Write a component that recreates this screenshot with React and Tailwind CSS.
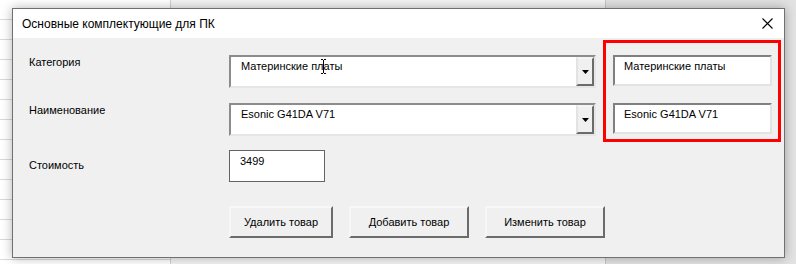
import React from 'react'

const font = "font-['Liberation_Sans','Noto_Sans',Arial,sans-serif]"

function ComboBox({ value, cursor }) {
  return (
    <div className="relative flex h-[33px] w-[367px] border-2 border-t-[#8c8c8c] border-l-[#8c8c8c] border-r-[#e6e6e6] border-b-[#e6e6e6] bg-white">
      <div className="flex-1 pl-[10px] pt-[3px] text-[11px] leading-[13px] text-black">{value}</div>
      <div className="flex w-[18px] items-center justify-center border-2 border-t-[#f4f4f4] border-l-[#e3e3e3] border-r-[#6b6b6b] border-b-[#6b6b6b] bg-[#f0f0f0]">
        <svg width="7" height="4" viewBox="0 0 7 4">
          <path d="M0 0h7L3.5 4z" fill="#000" />
        </svg>
      </div>
      {cursor && (
        <svg className="absolute left-[90px] top-[2px]" width="5" height="15" viewBox="0 0 5 15">
          <path d="M0 0.5h2M3 0.5h2M2.5 1v13M0 14.5h2M3 14.5h2" stroke="#000" strokeWidth="1" />
        </svg>
      )}
    </div>
  )
}

function TextBox({ value }) {
  return (
    <div className="h-[31px] w-[159px] border-2 border-t-[#808080] border-l-[#808080] border-r-[#e3e3e3] border-b-[#e3e3e3] bg-white pl-[9px] pt-[3px] text-[11px] leading-[13px] text-black">
      {value}
    </div>
  )
}

function Button({ children, w }) {
  return (
    <button className={`flex h-[32px] shrink-0 items-center justify-center border-2 border-t-[#f7f7f7] border-l-[#f7f7f7] border-r-[#6b6b6b] border-b-[#6b6b6b] bg-[#f0f0f0] text-[11px] text-black ${w}`}>
      {children}
    </button>
  )
}

export default function App() {
  return (
    <div className={`relative h-[264px] w-[796px] overflow-hidden ${font}`}>
      {/* лист Excel на фоне */}
      <div className="flex h-full w-full">
        <div className="w-[170px] bg-white bg-[repeating-linear-gradient(to_bottom,transparent_0px,transparent_19px,#dadada_19px,#dadada_20px)]" />
        <div className="w-[435px] border-l border-[#d0d0d0] bg-[#f4f4f4]" />
        <div className="flex-1 border-l border-[#c6c6c6] bg-[#e2e2e2]" />
      </div>

      {/* окно формы */}
      <div className="absolute left-[12px] top-[8px] flex h-[250px] w-[773px] flex-col border border-[#707070] bg-[#f0f0f0] shadow-[0_0_10px_rgba(0,0,0,0.3)]">
        <div className="flex h-[29px] items-center justify-between bg-white pl-[9px] pr-[11px]">
          <span className="text-[12px] text-black">Основные комплектующие для ПК</span>
          <svg width="11" height="11" viewBox="0 0 11 11">
            <path d="M0.5 0.5l10 10M10.5 0.5l-10 10" stroke="#000" strokeWidth="1.1" />
          </svg>
        </div>

        <div className="flex flex-1 pl-[16px] pt-[2px]">
          <div className="mt-[15px] flex w-[567px] shrink-0 flex-col">
            <div className="flex">
              <div className="w-[200px] pt-[1px] text-[11px] leading-[13px] text-black">Категория</div>
              <ComboBox value="Материнские платы" cursor />
            </div>
            <div className="mt-[15px] flex">
              <div className="w-[200px] pt-[1px] text-[11px] leading-[13px] text-black">Наименование</div>
              <ComboBox value="Esonic G41DA V71" />
            </div>
            <div className="mt-[14px] flex">
              <div className="w-[200px] pt-[9px] text-[11px] leading-[13px] text-black">Стоимость</div>
              <div className="h-[32px] w-[96px] border border-[#646464] bg-white pl-[10px] pt-[4px] text-[11px] leading-[13px] text-black">
                3499
              </div>
            </div>
            <div className="mt-[24px] flex gap-[16px] pl-[200px]">
              <Button w="w-[104px]">Удалить товар</Button>
              <Button w="w-[120px]">Добавить товар</Button>
              <Button w="w-[120px]">Изменить товар</Button>
            </div>
          </div>

          <div className="ml-[7px] flex h-[102px] w-[178px] shrink-0 flex-col gap-[17px] border-[3px] border-[#ff0000] pl-[7px] pt-[12px]">
            <TextBox value="Материнские платы" />
            <TextBox value="Esonic G41DA V71" />
          </div>
        </div>
      </div>
    </div>
  )
}
